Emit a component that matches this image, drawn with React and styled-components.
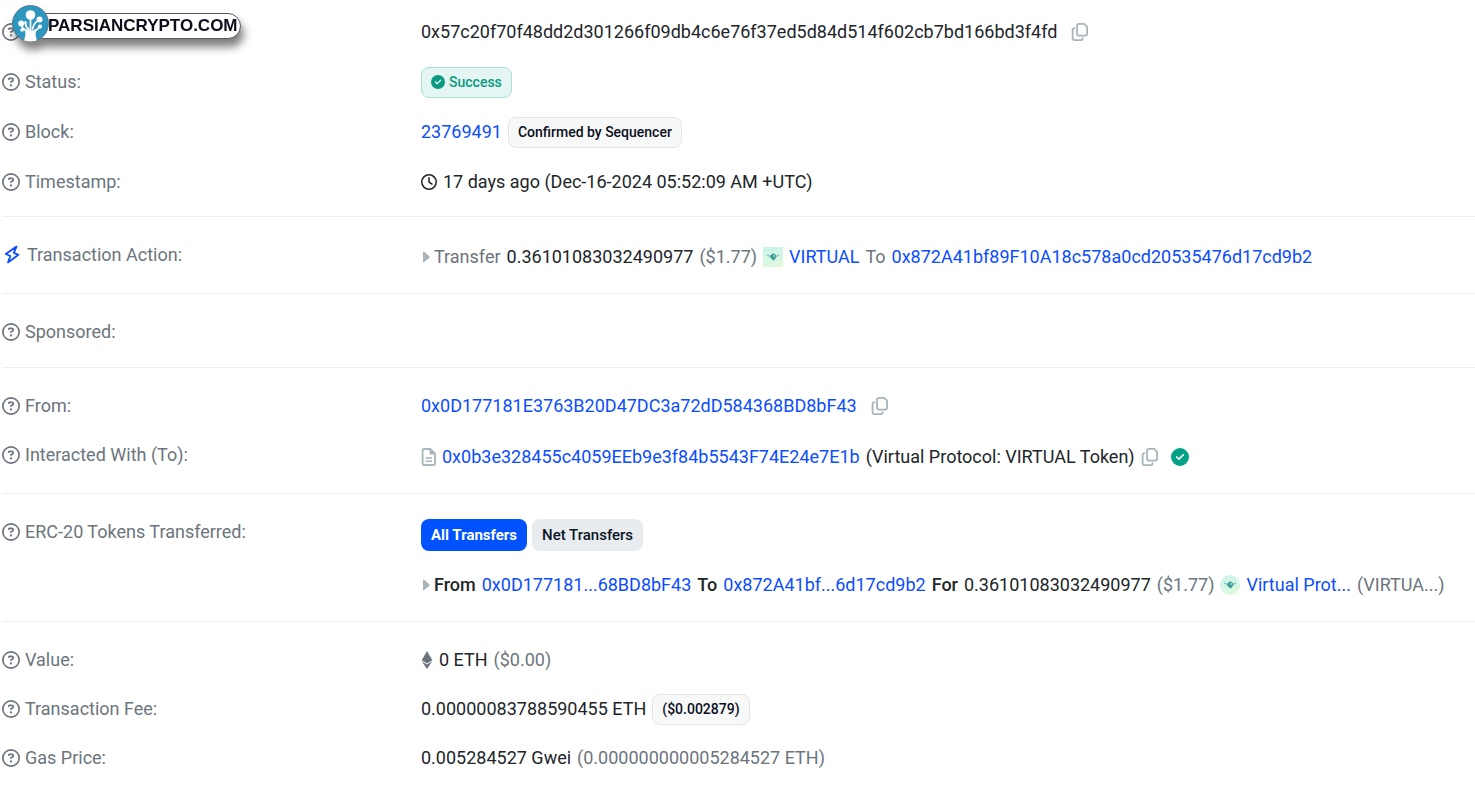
import React, { useState } from 'react';
import styled, { createGlobalStyle } from 'styled-components';
import {
  FaCircleCheck,
  FaEthereum,
  FaRegCircleQuestion,
  FaRegClock,
} from 'react-icons/fa6';

const GlobalStyle = createGlobalStyle`
  body {
    margin: 0;
    background: #fff;
    color: #212529;
    font-family: Roboto, "Liberation Sans", sans-serif;
    font-size: 18px;
    line-height: 32px;
  }

  button {
    font-family: inherit;
    cursor: pointer;
  }
`;

const Field = ({ label, icon, children }) => (
  <Row>
    <Label>
      {icon || <FaRegCircleQuestion size={18} />}
      {label}
    </Label>
    <Value>{children}</Value>
  </Row>
);

const CopyButton = ({ near }) => (
  <IconButton type="button" aria-label="Copy" $near={near}>
    <svg width="18" height="20" viewBox="0 0 18 20" fill="none" stroke="currentColor" strokeWidth="1.8" strokeLinejoin="round">
      <path d="M8 1.9 H13.2 L16.1 4.8 V11.6 Q16.1 13.6 14.1 13.6 H8 Q6 13.6 6 11.6 V3.9 Q6 1.9 8 1.9 Z" />
      <path d="M4.2 6.1 H3.6 Q1.6 6.1 1.6 8.1 V16.1 Q1.6 18.1 3.6 18.1 H9.6 Q11.6 18.1 11.6 16.2 V15.6" />
    </svg>
  </IconButton>
);

const FileIcon = () => (
  <svg width="15" height="20" viewBox="0 0 15 20" fill="none" stroke="currentColor" strokeWidth="1.8" strokeLinejoin="round">
    <path d="M3.3 2 H9.4 L14 6.6 V16.2 Q14 18 12.2 18 H3.4 Q1.6 18 1.6 16.2 V3.8 Q1.6 2 3.3 2 Z" />
    <path d="M9 2 V7 H14 Z" fill="currentColor" strokeWidth="1" />
    <path d="M4.6 11 H11 M4.6 14.3 H11" strokeWidth="1.5" />
  </svg>
);

const CaretIcon = () => (
  <svg width="10" height="12" viewBox="0 0 10 12">
    <path d="M2 1.2 Q2 0.2 3 0.8 L8.4 5.3 Q9 6 8.4 6.7 L3 11.2 Q2 11.8 2 10.8 Z" fill="#a9b4bb" />
  </svg>
);

const BoltIcon = () => (
  <svg width="20" height="20" viewBox="0 0 20 20" fill="none" stroke="#0b4dff" strokeWidth="1.8" strokeLinejoin="round">
    <path d="M14.5 1.6 L3.8 9 L8.4 11 L6 17.4 L16.4 9.8 L11.8 7.8 Z" />
  </svg>
);

const TokenIcon = ({ round }) => (
  <TokenBox $round={round}>
    <svg width="20" height="20" viewBox="0 0 20 20">
      <path d="M4 8 L7.6 9.6 M16 8 L12.6 9.6" stroke="#79bcc0" strokeWidth="1.3" />
      <path d="M7.4 8.4 L10 6.2 L12.8 7.8 L13 10.4 L10.8 13.8 L9.4 12.4 L7.4 11 Z" fill="#3a9895" />
      <circle cx="11" cy="9" r="1" fill="#a5dcd4" />
    </svg>
  </TokenBox>
);

const Logo = () => (
  <LogoLink href="#">
    <svg width="37" height="37" viewBox="0 0 37 37">
      <circle cx="18.5" cy="18.5" r="18" fill="#2e97c0" stroke="#4f6f80" strokeWidth="0.8" />
      <g stroke="#fff" strokeWidth="1.7" fill="none" strokeLinecap="round">
        <path d="M18.5 10 V28" />
        <path d="M9 19 Q10 24 16.5 27" />
        <path d="M13.5 18 Q13.5 22 17 25" />
        <path d="M27.5 15 Q22 17 20.5 24" />
        <path d="M27.5 22 Q25 25.5 20.5 27" />
      </g>
      <path d="M12.5 23.5 Q18.5 28 24.5 23.5 Q22.5 30 25 35.4 Q18.5 37.6 12 35.4 Q14.5 30 12.5 23.5 Z" fill="#fff" />
      <circle cx="18.5" cy="10" r="4.8" fill="#fff" />
      <circle cx="27.5" cy="14.5" r="3" fill="#fff" />
      <circle cx="9.2" cy="18.6" r="3" fill="#fff" />
      <circle cx="13.4" cy="17.6" r="1.4" fill="#fff" />
      <circle cx="28" cy="21.6" r="2.1" fill="#fff" />
      <circle cx="10" cy="25" r="1.8" fill="#fff" />
    </svg>
    <LogoText>PARSIANCRYPTO.COM</LogoText>
  </LogoLink>
);

const App = () => {
  const [tab, setTab] = useState('all');

  return (
    <Page>
      <GlobalStyle />
      <Logo />

      <Section>
        <Field label="Transaction Hash:">
          <Line>
            <span>0x57c20f70f48dd2d301266f09db4c6e76f37ed5d84d514f602cb7bd166bd3f4fd</span>
            <CopyButton />
          </Line>
        </Field>
        <Field label="Status:">
          <Line>
            <Badge $success>
              <FaCircleCheck size={14} />
              Success
            </Badge>
          </Line>
        </Field>
        <Field label="Block:">
          <Line>
            <Link href="#">23769491</Link>
            <Badge>Confirmed by Sequencer</Badge>
          </Line>
        </Field>
        <Field label="Timestamp:">
          <Line>
            <FaRegClock size={16} />
            <span>17 days ago (Dec-16-2024 05:52:09 AM +UTC)</span>
          </Line>
        </Field>
      </Section>

      <Section>
        <Field label="Transaction Action:" icon={<BoltIcon />}>
          <Line $tall>
            <Caret><CaretIcon /></Caret>
            <Muted>Transfer</Muted>
            <span>0.36101083032490977</span>
            <Muted>($1.77)</Muted>
            <TokenIcon />
            <Link href="#">VIRTUAL</Link>
            <Muted>To</Muted>
            <Link href="#">0x872A41bf89F10A18c578a0cd20535476d17cd9b2</Link>
          </Line>
        </Field>
      </Section>

      <Section>
        <Field label="Sponsored:" />
      </Section>

      <Section>
        <Field label="From:">
          <Line>
            <Link href="#">0x0D177181E3763B20D47DC3a72dD584368BD8bF43</Link>
            <CopyButton />
          </Line>
        </Field>
        <Field label="Interacted With (To):">
          <Line $tall>
            <Grey><FileIcon /></Grey>
            <Link href="#">0x0b3e328455c4059EEb9e3f84b5543F74E24e7E1b</Link>
            <span>(Virtual Protocol: VIRTUAL Token)</span>
            <CopyButton near />
            <Verified><FaCircleCheck size={18} /></Verified>
          </Line>
        </Field>
      </Section>

      <Section>
        <Field label="ERC-20 Tokens Transferred:">
          <Tabs>
            <Tab type="button" $active={tab === 'all'} onClick={() => setTab('all')}>All Transfers</Tab>
            <Tab type="button" $active={tab === 'net'} onClick={() => setTab('net')}>Net Transfers</Tab>
          </Tabs>
          <Line $tall>
            <Caret><CaretIcon /></Caret>
            <Strong>From</Strong>
            <Link href="#">0x0D177181...68BD8bF43</Link>
            <Strong>To</Strong>
            <Link href="#">0x872A41bf...6d17cd9b2</Link>
            <Strong>For</Strong>
            <span>0.36101083032490977</span>
            <Muted>($1.77)</Muted>
            <TokenIcon round />
            <Link href="#">Virtual Prot...</Link>
            <Muted>(VIRTUA...)</Muted>
          </Line>
        </Field>
      </Section>

      <Section>
        <Field label="Value:">
          <Line>
            <Ether><FaEthereum size={18} /></Ether>
            <span>0 ETH</span>
            <Muted>($0.00)</Muted>
          </Line>
        </Field>
        <Field label="Transaction Fee:">
          <Line>
            <span>0.00000083788590455 ETH</span>
            <Badge>($0.002879)</Badge>
          </Line>
        </Field>
        <Field label="Gas Price:">
          <Line>
            <span>0.005284527 Gwei</span>
            <Muted>(0.000000000005284527 ETH)</Muted>
          </Line>
        </Field>
      </Section>
    </Page>
  );
};

const Page = styled.main`
  position: relative;
  padding-left: 2px;
`;

const Section = styled.dl`
  display: flex;
  flex-direction: column;
  gap: 17px;
  margin: 0;
  padding: 22px 0 19px;
  border-bottom: 1px solid #eceef0;

  &:first-of-type {
    gap: 18px;
    padding: 16px 0 18px;
  }

  &:last-of-type {
    border-bottom: 0;
  }
`;

const Row = styled.div`
  display: grid;
  grid-template-columns: 419px 1fr;
`;

const Label = styled.dt`
  display: flex;
  align-items: center;
  align-self: start;
  gap: 5px;
  color: #6c757d;
`;

const Value = styled.dd`
  display: flex;
  flex-direction: column;
  gap: 16px;
  margin: 0;
`;

const Line = styled.div`
  display: flex;
  align-items: center;
  gap: 6px;
  min-height: ${({ $tall }) => ($tall ? 35 : 32)}px;
  white-space: nowrap;
`;

const Link = styled.a`
  color: #0b4dff;
  text-decoration: none;
`;

const Muted = styled.span`
  color: #6c757d;
`;

const Strong = styled.span`
  font-weight: 500;
`;

const Grey = styled.span`
  display: flex;
  color: #a9b4bb;
`;

const Caret = styled(Grey)`
  width: 7px;

  svg {
    flex-shrink: 0;
  }
`;

const Ether = styled(Grey)`
  width: 12px;
  justify-content: center;
  color: #6c757d;

  svg {
    flex-shrink: 0;
  }
`;

const Verified = styled.span`
  display: flex;
  margin-left: 6px;
  color: #00a186;
`;

const IconButton = styled.button`
  display: flex;
  margin-left: ${({ $near }) => ($near ? '0' : '8px')};
  padding: 0;
  border: 0;
  background: none;
  color: #a9b4bb;
`;

const Badge = styled.span`
  display: inline-flex;
  align-items: center;
  gap: 4px;
  padding: 4px 9px 5px;
  border: 1px solid ${({ $success }) => ($success ? '#a6e0d6' : '#e2e4e6')};
  border-radius: 8px;
  background: ${({ $success }) => ($success ? '#e5f5f3' : '#f7f8f8')};
  color: ${({ $success }) => ($success ? '#0a9a82' : '#0b0f1c')};
  font-size: 14px;
  font-weight: 500;
  line-height: 20px;
`;

const Tabs = styled.div`
  display: flex;
  gap: 5px;
  padding-top: 3px;
`;

const Tab = styled.button`
  padding: 6px 10px;
  border: 0;
  border-radius: 8px;
  background: ${({ $active }) => ($active ? '#0052ff' : '#e9ecef')};
  color: ${({ $active }) => ($active ? '#fff' : '#0b1526')};
  font-size: 15px;
  font-weight: ${({ $active }) => ($active ? 700 : 500)};
  line-height: 20px;
`;

const TokenBox = styled.span`
  display: flex;
  border-radius: ${({ $round }) => ($round ? '50%' : '0')};
  background: linear-gradient(160deg, #c9f2ee, #e2fbd9);
`;

const LogoLink = styled.a`
  position: absolute;
  top: 5px;
  left: 12px;
  display: flex;
  align-items: center;
  color: #0b0d18;
  text-decoration: none;
  filter: drop-shadow(3px 8px 4px rgba(0, 0, 0, 0.5));

  svg {
    position: relative;
    z-index: 1;
  }
`;

const LogoText = styled.span`
  margin-top: 4px;
  margin-left: -18px;
  padding: 0 2px 0 16px;
  border: 1px solid #55585f;
  border-radius: 13px;
  background: #fff;
  font-family: "Liberation Sans", Arial, sans-serif;
  font-size: 17px;
  font-weight: 700;
  line-height: 24px;
`;

export default App;
